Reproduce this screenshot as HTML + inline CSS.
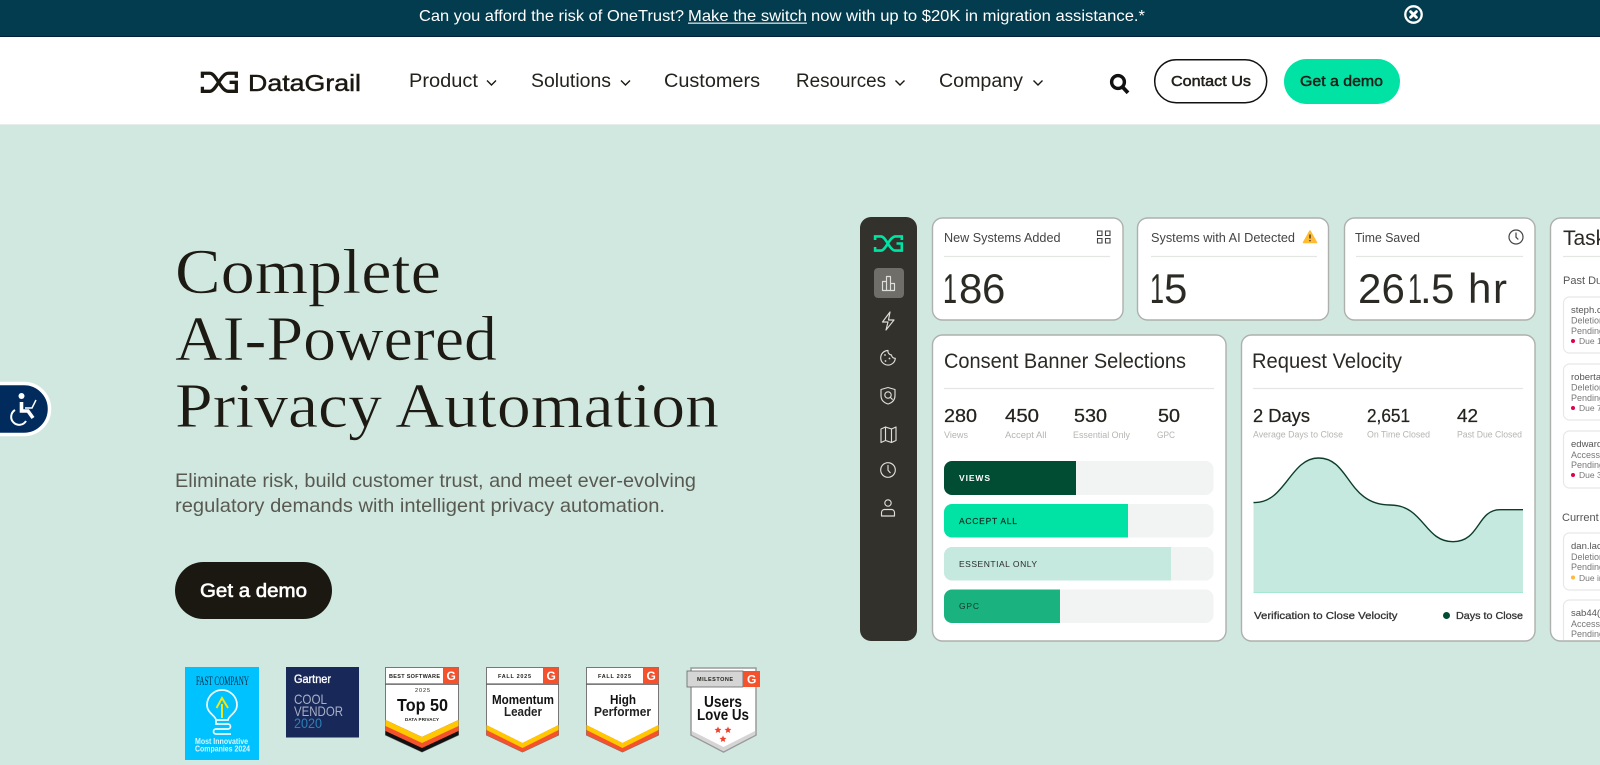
<!DOCTYPE html>
<html lang="en"><head><meta charset="utf-8"><title>DataGrail</title>
<style>
html,body{margin:0;padding:0;width:1600px;height:765px;overflow:hidden;background:#d1e8e0}
svg{display:block}
text{font-family:"Liberation Sans",sans-serif;fill:#23221d}
.s{font-family:"Liberation Serif",serif;fill:#1c1a12;stroke:#d1e8e0;stroke-width:.55}
.b{font-weight:700}
.m{stroke:#1a1810;stroke-width:.45}
.m2{stroke:#2b2a25;stroke-width:.25}
.l{fill:#b4b6b2}
.i{fill:none;stroke:#dededa;stroke-width:1.15;stroke-linecap:round;stroke-linejoin:round}
.card{fill:#fff;stroke:#adb0ad;stroke-width:1.4}
.ln{stroke:#e4e6e4;stroke-width:1.2}
.t{fill:#777}
.n{fill:#555}
</style></head><body>
<svg width="1600" height="765" viewBox="0 0 1600 765" xmlns="http://www.w3.org/2000/svg">
<rect width="1600" height="765" fill="#d1e8e0"/>

<!-- banner -->
<rect width="1600" height="36" fill="#033c4e"/><rect y="36" width="1600" height="1" fill="#01203a"/>
<text x="419" y="21" font-size="16" style="fill:#fff" textLength="265" lengthAdjust="spacingAndGlyphs">Can you afford the risk of OneTrust?</text>
<text x="688" y="21" font-size="16" style="fill:#fff" textLength="119" lengthAdjust="spacingAndGlyphs">Make the switch</text>
<rect x="688" y="22.6" width="119" height="1.1" fill="#fff"/>
<text x="811" y="21" font-size="16" style="fill:#fff" textLength="334" lengthAdjust="spacingAndGlyphs">now with up to $20K in migration assistance.*</text>
<circle cx="1413.5" cy="14.5" r="8.2" fill="none" stroke="#fff" stroke-width="2.3"/>
<path d="M1410.6 11.6l5.8 5.8M1416.4 11.6l-5.8 5.8" stroke="#fff" stroke-width="2.8" stroke-linecap="round"/>

<!-- nav -->
<rect y="37" width="1600" height="87" fill="#fff"/><rect y="124" width="1600" height="1" fill="#e8ecea"/>
<g transform="translate(201 71.5) scale(1.27)" fill="none" stroke="#1a1810" stroke-width="2.6"><path d="M1.1 5V1.4H7C12 1.4 15.5 15.6 21.5 15.6H27.8V8.5H22.5"/><path d="M1.1 12V15.6H7C12 15.6 15.5 1.4 21.5 1.4H27.8V5"/></g>
<text x="248" y="91" font-size="23" class="m" style="fill:#1a1810" textLength="113" lengthAdjust="spacingAndGlyphs">DataGrail</text>
<g font-size="19">
<text x="409" y="87" textLength="69" lengthAdjust="spacingAndGlyphs">Product</text>
<text x="531" y="87" textLength="80" lengthAdjust="spacingAndGlyphs">Solutions</text>
<text x="664" y="87" textLength="96" lengthAdjust="spacingAndGlyphs">Customers</text>
<text x="796" y="87" textLength="90" lengthAdjust="spacingAndGlyphs">Resources</text>
<text x="939" y="87" textLength="84" lengthAdjust="spacingAndGlyphs">Company</text>
</g>
<path d="M487 80.5l4.5 4.5 4.5-4.5M621 80.5l4.5 4.5 4.5-4.5M895.5 80.5l4.5 4.5 4.5-4.5M1033.5 80.5l4.5 4.5 4.5-4.5" fill="none" stroke="#1a1810" stroke-width="1.4"/>
<circle cx="1118" cy="82" r="6.4" fill="none" stroke="#111" stroke-width="3.4"/><path d="M1123 87.5l5 5.3" stroke="#111" stroke-width="3.8"/>
<rect x="1154.7" y="59.7" width="112" height="43" rx="21.5" fill="#fff" stroke="#111" stroke-width="1.5"/>
<text x="1171" y="86" font-size="14.5" class="m" textLength="80" lengthAdjust="spacingAndGlyphs">Contact Us</text>
<rect x="1284" y="59" width="116" height="45" rx="22.5" fill="#00e3a5"/>
<text x="1300" y="86" font-size="14.5" class="m" textLength="83" lengthAdjust="spacingAndGlyphs">Get a demo</text>

<!-- hero -->
<text class="s" x="175" y="293" font-size="64" textLength="266" lengthAdjust="spacingAndGlyphs">Complete</text>
<text class="s" x="175" y="360" font-size="64" textLength="322" lengthAdjust="spacingAndGlyphs">AI-Powered</text>
<text class="s" x="175" y="427" font-size="64" textLength="544" lengthAdjust="spacingAndGlyphs">Privacy Automation</text>
<text x="175" y="487" font-size="19.5" style="fill:#585a52" textLength="521" lengthAdjust="spacingAndGlyphs">Eliminate risk, build customer trust, and meet ever-evolving</text>
<text x="175" y="512" font-size="19.5" style="fill:#585a52" textLength="490" lengthAdjust="spacingAndGlyphs">regulatory demands with intelligent privacy automation.</text>
<rect x="175" y="562" width="157" height="57" rx="28.5" fill="#1a1810"/>
<text x="200" y="597" font-size="19" style="fill:#fff;stroke:#fff;stroke-width:.6" textLength="107" lengthAdjust="spacingAndGlyphs">Get a demo</text>

<!-- accessibility -->
<path d="M-4 383.5H24A25.5 25.5 0 0 1 24 434.5H-4Z" fill="#002b5c" stroke="#fff" stroke-width="3.5"/>
<circle cx="21.5" cy="396" r="3" fill="#fff"/>
<path d="M21.5 402V411H28L33 418" fill="none" stroke="#fff" stroke-width="3.6"/>
<path d="M25 408H32L36 400" fill="none" stroke="#fff" stroke-width="1.5"/>
<path d="M15 410A8 8 0 1 0 26 421" fill="none" stroke="#fff" stroke-width="2"/>

<!-- sidebar -->
<rect x="860" y="217" width="57" height="424" rx="11" fill="#32312b"/>
<g transform="translate(874 235)" fill="none" stroke="#00e3a5" stroke-width="2.6"><path d="M1.1 5V1.4H7C12 1.4 15.5 15.6 21.5 15.6H27.8V8.5H22.5"/><path d="M1.1 12V15.6H7C12 15.6 15.5 1.4 21.5 1.4H27.8V5"/></g>
<rect x="874" y="268" width="30" height="30" rx="4" fill="#6f6e68"/>
<path class="i" d="M882.5 290.5h12M882.5 290.5v-9h4v9M886.5 290.5v-14h4v14M890.5 290.5v-7h4v7"/>
<path class="i" d="M890 312l-7.5 10h5.5l-2 8 8-10h-5.5z"/>
<path class="i" d="M888 350.5a7.3 7.3 0 1 0 7.3 7.8 3.5 3.5 0 0 1-3.8-3.3 3.8 3.8 0 0 1-3.5-4.5z"/>
<circle cx="885" cy="355" r=".9" fill="#dededa"/><circle cx="889.5" cy="358.5" r=".9" fill="#dededa"/><circle cx="885.5" cy="361" r=".9" fill="#dededa"/>
<path class="i" d="M888 387.5l7 2v6c0 4.5-3 7.3-7 8.5-4-1.2-7-4-7-8.5v-6z"/><circle class="i" cx="888" cy="395" r="3.2"/><path class="i" d="M890.5 397.5l1.8 1.8"/>
<path class="i" d="M881 429l4.5-2 6 2 4.5-2v13.5l-4.5 2-6-2-4.5 2zM885.5 427v13.5M891.5 429v13.5"/>
<circle class="i" cx="888" cy="470" r="7.3"/><path class="i" d="M888 465.5v4.7l2.2 2.5"/>
<circle class="i" cx="888" cy="503" r="3.2"/><path class="i" d="M881.5 516v-3.5a3 3 0 0 1 3-3h7a3 3 0 0 1 3 3v3.5z"/>

<!-- stat cards -->
<rect class="card" x="932.5" y="218" width="190.5" height="102" rx="10"/>
<text x="944" y="242" font-size="12.5" style="fill:#444" textLength="116.5" lengthAdjust="spacingAndGlyphs">New Systems Added</text>
<path d="M1097.5 231h4.5v4.500h-4.500zM1105.500 231h4.500v4.500h-4.500zM1097.500 238.500h4.500v4.500h-4.500zM1105.500 238.500h4.500v4.500h-4.500z" fill="none" stroke="#444" stroke-width="1.1"/>
<line class="ln" x1="944" x2="1110" y1="256.5" y2="256.5"/>
<text y="303" font-size="42" style="fill:#2b2a25"><tspan x="943" textLength="14" lengthAdjust="spacingAndGlyphs">1</tspan><tspan x="959">8</tspan><tspan x="982">6</tspan></text>

<rect class="card" x="1137.5" y="218" width="191" height="102" rx="10"/>
<text x="1151" y="242" font-size="12.5" style="fill:#444" textLength="144" lengthAdjust="spacingAndGlyphs">Systems with AI Detected</text>
<path d="M1310 231l6.5 11.5h-13z" fill="#ffbb33" stroke="#ffbb33" stroke-width="1.5" stroke-linejoin="round"/><path d="M1310 234.5v4M1310 240v1.2" stroke="#222" stroke-width="1.2"/>
<line class="ln" x1="1151" x2="1317" y1="256.5" y2="256.5"/>
<text y="303" font-size="42" style="fill:#2b2a25"><tspan x="1150" textLength="14" lengthAdjust="spacingAndGlyphs">1</tspan><tspan x="1164">5</tspan></text>

<rect class="card" x="1344.5" y="218" width="190.5" height="102" rx="10"/>
<text x="1355" y="242" font-size="12.5" style="fill:#444" textLength="65" lengthAdjust="spacingAndGlyphs">Time Saved</text>
<circle cx="1516" cy="237" r="7" fill="none" stroke="#444" stroke-width="1.2"/><path d="M1516 232.5v4.700l2.300 2.300" fill="none" stroke="#444" stroke-width="1.2"/>
<line class="ln" x1="1356" x2="1523" y1="256.5" y2="256.5"/>
<text y="303" font-size="42" style="fill:#2b2a25"><tspan x="1358">2</tspan><tspan x="1381.5">6</tspan><tspan x="1408" textLength="14" lengthAdjust="spacingAndGlyphs">1</tspan><tspan x="1420">.</tspan><tspan x="1431">5</tspan><tspan x="1468">h</tspan><tspan x="1493">r</tspan></text>

<!-- consent -->
<rect class="card" x="932.5" y="335" width="293.5" height="306" rx="10"/>
<text x="944" y="368" font-size="21" style="fill:#2b2a25" textLength="242" lengthAdjust="spacingAndGlyphs">Consent Banner Selections</text>
<line class="ln" x1="944" x2="1214" y1="388.5" y2="388.5"/>
<g font-size="18">
<text class="m2" x="944" y="422" textLength="33" lengthAdjust="spacingAndGlyphs">280</text>
<text class="m2" x="1005" y="422" textLength="34" lengthAdjust="spacingAndGlyphs">450</text>
<text class="m2" x="1074" y="422" textLength="33" lengthAdjust="spacingAndGlyphs">530</text>
<text class="m2" x="1158" y="422" textLength="22" lengthAdjust="spacingAndGlyphs">50</text>
</g>
<g font-size="9">
<text class="l" x="944" y="438" textLength="24" lengthAdjust="spacingAndGlyphs">Views</text>
<text class="l" x="1005" y="438" textLength="41.5" lengthAdjust="spacingAndGlyphs">Accept All</text>
<text class="l" x="1073" y="438" textLength="57" lengthAdjust="spacingAndGlyphs">Essential Only</text>
<text class="l" x="1157" y="438" textLength="18" lengthAdjust="spacingAndGlyphs">GPC</text>
</g>
<rect x="944" y="461" width="269.5" height="34" rx="8" fill="#f1f4f2"/>
<path d="M952 461H1076V495H952A8 8 0 0 1 944 487V469A8 8 0 0 1 952 461Z" fill="#004d33"/>
<rect x="944" y="504" width="269.5" height="33.5" rx="8" fill="#f1f4f2"/>
<path d="M952 504H1128V537.5H952A8 8 0 0 1 944 529.5V512A8 8 0 0 1 952 504Z" fill="#00e3a5"/>
<rect x="944" y="547" width="269.5" height="33.5" rx="8" fill="#f1f4f2"/>
<path d="M952 547H1171V580.5H952A8 8 0 0 1 944 572.5V555A8 8 0 0 1 952 547Z" fill="#c5e8df"/>
<rect x="944" y="589.5" width="269.5" height="33.5" rx="8" fill="#f1f4f2"/>
<path d="M952 589.5H1060V623H952A8 8 0 0 1 944 615V597.5A8 8 0 0 1 952 589.5Z" fill="#1ab380"/>
<g font-size="8.5">
<text x="959" y="481" class="b" style="fill:#fff" textLength="31" lengthAdjust="spacing">VIEWS</text>
<text x="959" y="524" style="fill:#11261f;stroke:#11261f;stroke-width:.15" textLength="58" lengthAdjust="spacing">ACCEPT ALL</text>
<text x="959" y="567" style="fill:#2a2a2a" textLength="78" lengthAdjust="spacing">ESSENTIAL ONLY</text>
<text x="959" y="609" style="fill:#17332a" textLength="20" lengthAdjust="spacing">GPC</text>
</g>

<!-- velocity -->
<rect class="card" x="1241.5" y="335" width="293.5" height="306" rx="10"/>
<text x="1252" y="368" font-size="21" style="fill:#2b2a25" textLength="150" lengthAdjust="spacingAndGlyphs">Request Velocity</text>
<line class="ln" x1="1253" x2="1523" y1="388.5" y2="388.5"/>
<g font-size="18">
<text class="m2" x="1253" y="422" textLength="57" lengthAdjust="spacingAndGlyphs">2 Days</text>
<text class="m2" x="1367" y="422" textLength="43" lengthAdjust="spacingAndGlyphs">2,651</text>
<text class="m2" x="1457" y="422" textLength="21" lengthAdjust="spacingAndGlyphs">42</text>
</g>
<g font-size="9">
<text class="l" x="1253" y="437.5" textLength="90" lengthAdjust="spacingAndGlyphs">Average Days to Close</text>
<text class="l" x="1367" y="437.5" textLength="63" lengthAdjust="spacingAndGlyphs">On Time Closed</text>
<text class="l" x="1457" y="437.5" textLength="65" lengthAdjust="spacingAndGlyphs">Past Due Closed</text>
</g>
<path d="M1253.5 502.5C1285 504 1290 458 1318.5 458C1350 458 1347 505 1390 505C1424 505 1424 541.7 1453 541.7C1480 541.7 1477 509.7 1500 509.7H1523V593H1253.5Z" fill="#c5e8df"/>
<rect x="1253.5" y="592" width="269.5" height="1" fill="#a5e8d2"/>
<path d="M1253.5 502.5C1285 504 1290 458 1318.5 458C1350 458 1347 505 1390 505C1424 505 1424 541.7 1453 541.7C1480 541.7 1477 509.7 1500 509.7H1523" fill="none" stroke="#0c3d2b" stroke-width="1.4"/>
<text x="1254" y="619" font-size="10.5" style="fill:#333;stroke:#333;stroke-width:.3" textLength="143.5" lengthAdjust="spacingAndGlyphs">Verification to Close Velocity</text>
<circle cx="1446.5" cy="615.5" r="3.5" fill="#004d33"/>
<text x="1456" y="619" font-size="10.5" style="fill:#333;stroke:#333;stroke-width:.3" textLength="67" lengthAdjust="spacingAndGlyphs">Days to Close</text>

<!-- tasks -->
<path d="M1610 218H1560.5A10 10 0 0 0 1550.5 228V631A10 10 0 0 0 1560.5 641H1610" fill="#fff" stroke="#adb0ad" stroke-width="1.4"/>
<text x="1563" y="245" font-size="21" style="fill:#2b2a25">Task</text>
<line class="ln" x1="1563" x2="1620" y1="256.5" y2="256.5"/>
<text x="1563" y="284" font-size="11" class="n">Past Du</text>
<text x="1562" y="521" font-size="11" class="n">Current</text>
<g fill="#fff" stroke="#e6e8e6" stroke-width="1.2">
<rect x="1563.5" y="297" width="70" height="56" rx="6"/>
<rect x="1563.5" y="364" width="70" height="56" rx="6"/>
<rect x="1563.5" y="431" width="70" height="57" rx="6"/>
<rect x="1563.5" y="533" width="70" height="57" rx="6"/>
<path d="M1610 600H1569.5A6 6 0 0 0 1563.5 606V640"/>
</g>
<g font-size="9.5">
<text class="n" x="1571" y="313">steph.c</text><text class="t" x="1571" y="323.5" font-size="9">Deletion</text><text class="t" x="1571" y="334" font-size="9">Pending</text><text class="t" x="1579" y="344" font-size="8.5">Due 1</text>
<text class="n" x="1571" y="380">roberta</text><text class="t" x="1571" y="390.5" font-size="9">Deletion</text><text class="t" x="1571" y="401" font-size="9">Pending</text><text class="t" x="1579" y="411" font-size="8.5">Due 7</text>
<text class="n" x="1571" y="447">edward</text><text class="t" x="1571" y="458" font-size="9">Access</text><text class="t" x="1571" y="468" font-size="9">Pending</text><text class="t" x="1579" y="478" font-size="8.5">Due 3</text>
<text class="n" x="1571" y="549">dan.lac</text><text class="t" x="1571" y="560" font-size="9">Deletion</text><text class="t" x="1571" y="570" font-size="9">Pending</text><text class="t" x="1579" y="581" font-size="8.5">Due in</text>
<text class="n" x="1571" y="616">sab44(</text><text class="t" x="1571" y="627" font-size="9">Access</text><text class="t" x="1571" y="637" font-size="9">Pending</text>
</g>
<g fill="#e0004d"><circle cx="1573" cy="341" r="2"/><circle cx="1573" cy="408" r="2"/><circle cx="1573" cy="475" r="2"/></g>
<circle cx="1573" cy="577.5" r="2" fill="#ffb93b"/>

<!-- badges -->
<rect x="185" y="667" width="74" height="93" fill="#00c2ff"/>
<text class="s" x="196" y="685" font-size="13" style="fill:#0b2a44;stroke:none" textLength="53" lengthAdjust="spacingAndGlyphs">FAST COMPANY</text>
<path d="M216 720C216 716 207 713 207 705A15 15 0 0 1 237 705C237 713 228 716 228 720ZM216 720v4h12a2.5 2.5 0 0 1 0 5h-12a2.5 2.5 0 0 0 0 5h15" fill="none" stroke="#f2fbff" stroke-width="1.7"/>
<path d="M222 718V704M216.5 708L222 698 228 708" fill="none" stroke="#ffe600" stroke-width="1.9"/>
<text x="195" y="744" font-size="8" class="b" style="fill:#d8f6ff" textLength="53" lengthAdjust="spacingAndGlyphs">Most Innovative</text>
<text x="195" y="751.5" font-size="8" class="b" style="fill:#d8f6ff" textLength="55" lengthAdjust="spacingAndGlyphs">Companies 2024</text>

<rect x="286" y="667" width="73" height="70.5" fill="#182858"/>
<text x="294" y="683" font-size="11.5" style="fill:#fff;stroke:#fff;stroke-width:.35" textLength="37" lengthAdjust="spacingAndGlyphs">Gartner</text>
<text x="294" y="704" font-size="14" style="fill:#a9b1c8" textLength="33" lengthAdjust="spacingAndGlyphs">COOL</text>
<text x="294" y="716" font-size="14" style="fill:#a9b1c8" textLength="49" lengthAdjust="spacingAndGlyphs">VENDOR</text>
<text x="294" y="728" font-size="14" style="fill:#2f80b8" textLength="28" lengthAdjust="spacingAndGlyphs">2020</text>

<g>
<path d="M385.5 667.5H458.5V735L422 752 385.5 735Z" fill="#fff" stroke="#777" stroke-width="1"/>
<path d="M385.5 720L422 737 458.5 720V735L422 752 385.5 735Z" fill="#111"/>
<path d="M385.5 720L422 737 458.5 720V731L422 748 385.5 731Z" fill="#f4512c"/>
<path d="M385.5 720L422 737 458.5 720V726L422 743 385.5 726Z" fill="#ffc800"/>
<rect x="385.5" y="683.5" width="73" height="1.2" fill="#444"/>
<rect x="443" y="667.5" width="15.5" height="16.5" fill="#f4512c"/>
<text x="446.5" y="680" font-size="12" class="b" style="fill:#fff">G</text>
<text x="389" y="678" font-size="5.5" class="b" textLength="51" lengthAdjust="spacing">BEST SOFTWARE</text>
<text x="415" y="692" font-size="5.5" textLength="15" lengthAdjust="spacing">2025</text>
<text x="397" y="711" font-size="17.5" class="b" style="fill:#111" textLength="51" lengthAdjust="spacingAndGlyphs">Top 50</text>
<text x="405" y="721" font-size="4.5" class="b" textLength="34" lengthAdjust="spacing">DATA PRIVACY</text>
</g>

<g>
<path d="M486.5 667.5H558.5V735L522.5 752 486.5 735Z" fill="#fff" stroke="#777" stroke-width="1"/>
<path d="M486.5 725L522.5 743 558.5 725V735L522.5 752 486.5 735Z" fill="#f4512c"/>
<path d="M486.5 725L522.5 743 558.5 725V730L522.5 748 486.5 730Z" fill="#ffc800"/>
<rect x="486.5" y="683.5" width="72" height="1.2" fill="#444"/>
<rect x="543" y="667.5" width="15.5" height="16.5" fill="#f4512c"/>
<text x="546.5" y="680" font-size="12" class="b" style="fill:#fff">G</text>
<text x="498" y="678" font-size="5.5" class="b" textLength="33" lengthAdjust="spacing">FALL 2025</text>
<text x="492" y="704" font-size="13" class="b" style="fill:#111" textLength="62" lengthAdjust="spacingAndGlyphs">Momentum</text>
<text x="504" y="716" font-size="13" class="b" style="fill:#222" textLength="38" lengthAdjust="spacingAndGlyphs">Leader</text>
</g>

<g>
<path d="M586.5 667.5H658.5V735L622.5 752 586.5 735Z" fill="#fff" stroke="#777" stroke-width="1"/>
<path d="M586.5 725L622.5 743 658.5 725V735L622.5 752 586.5 735Z" fill="#f4512c"/>
<path d="M586.5 725L622.5 743 658.5 725V730L622.5 748 586.5 730Z" fill="#ffc800"/>
<rect x="586.5" y="683.5" width="72" height="1.2" fill="#444"/>
<rect x="643" y="667.5" width="15.5" height="16.5" fill="#f4512c"/>
<text x="646.5" y="680" font-size="12" class="b" style="fill:#fff">G</text>
<text x="598" y="678" font-size="5.5" class="b" textLength="33" lengthAdjust="spacing">FALL 2025</text>
<text x="610" y="704" font-size="13" class="b" style="fill:#111" textLength="26" lengthAdjust="spacingAndGlyphs">High</text>
<text x="594" y="716" font-size="13" class="b" style="fill:#222" textLength="57" lengthAdjust="spacingAndGlyphs">Performer</text>
</g>

<g>
<path d="M691 668H756V735L723.5 752 691 735Z" fill="#fff" stroke="#9a9a9a" stroke-width="1.5"/>
<path d="M692 735L723.5 751 755 735V731L723.5 747 692 731Z" fill="#d5d5d5"/>
<rect x="687" y="671" width="56" height="16" fill="#d5d5d5" stroke="#666" stroke-width=".8"/>
<rect x="743" y="671" width="17" height="16" fill="#f4512c"/>
<text x="747" y="683.5" font-size="12" class="b" style="fill:#fff">G</text>
<text x="697" y="681" font-size="5.5" class="b" textLength="36" lengthAdjust="spacing">MILESTONE</text>
<text x="704" y="707" font-size="16" class="b" style="fill:#111" textLength="38" lengthAdjust="spacingAndGlyphs">Users</text>
<text x="697" y="720" font-size="16" class="b" style="fill:#111" textLength="52" lengthAdjust="spacingAndGlyphs">Love Us</text>
<path d="M718 726.5l1 2.3 2.5.2-1.900 1.600.6 2.400-2.200-1.300-2.200 1.300.6-2.400-1.900-1.600 2.500-.2zM728 726.500l1 2.300 2.500.2-1.900 1.600.6 2.400-2.200-1.300-2.200 1.300.6-2.400-1.900-1.600 2.500-.2zM723 735.500l1 2.300 2.500.2-1.900 1.600.6 2.400-2.200-1.300-2.200 1.300.6-2.400-1.900-1.600 2.500-.2z" fill="#f4412c"/>
</g>
</svg>
</body></html>
